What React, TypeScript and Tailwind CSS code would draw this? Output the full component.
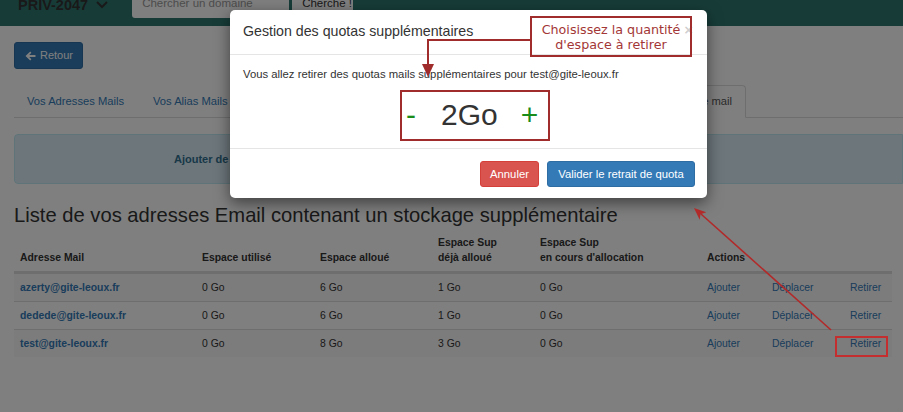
import React from "react";

const rows = [
  { email: "azerty@gite-leoux.fr", used: "0 Go", alloc: "6 Go", sup: "1 Go", pending: "0 Go" },
  { email: "dedede@gite-leoux.fr", used: "0 Go", alloc: "6 Go", sup: "1 Go", pending: "0 Go" },
  { email: "test@gite-leoux.fr", used: "0 Go", alloc: "8 Go", sup: "3 Go", pending: "0 Go" },
];

export default function App() {
  return (
    <div className="relative w-[903px] h-[412px] overflow-hidden bg-white font-['Liberation_Sans',Arial,sans-serif] text-[#333]">
      {/* Top navbar */}
      <div className="h-[26px] bg-[#2e7870] flex items-start overflow-hidden">
        <div className="ml-[18px] mt-[-3px] flex items-start">
          <span className="text-[14.5px] font-bold leading-[16px] text-[#333]">PRIV-2047</span>
          <svg className="ml-[8px] mt-[4px]" width="12" height="8" viewBox="0 0 12 8">
            <polyline points="1,1 6,6 11,1" fill="none" stroke="#333" strokeWidth="2" />
          </svg>
        </div>
        <div className="ml-[24px] mt-[-10px] h-[28px] w-[157px] bg-white rounded-[3px] flex items-center pl-[10px] text-[11.5px] text-[#999]">
          Chercher un domaine
        </div>
        <div className="ml-[3px] mt-[-10px] h-[28px] w-[61px] bg-white rounded-r-[3px] flex items-center pl-[10px] text-[11.5px] text-[#333]">
          Cherche !
        </div>
      </div>

      {/* Main content */}
      <div className="pl-[14px] pr-[11px]">
        <div className="mt-[16px] h-[27px] w-[69px] bg-[#337ab7] border border-[#2e6da4] rounded-[3px] flex items-center pl-[10px] gap-[4px] text-white text-[11px]">
          <svg width="11" height="10" viewBox="0 0 11 10">
            <path d="M0.5 5 L5.2 0.6 L6.4 1.8 L4.2 4 L10.5 4 L10.5 6 L4.2 6 L6.4 8.2 L5.2 9.4 Z" fill="white" />
          </svg>
          <span>Retour</span>
        </div>

        <div className="mt-[16px] h-[33px] -mr-[11px] flex border-b border-[#ddd] text-[11.2px]">
          <div className="w-[126px] pl-[13px] flex items-center text-[#337ab7] whitespace-nowrap">Vos Adresses Mails</div>
          <div className="w-[106px] pl-[13px] flex items-center text-[#337ab7] whitespace-nowrap">Vos Alias Mails</div>
          <div className="w-[162px] pl-[13px] flex items-center text-[#337ab7] whitespace-nowrap">Vos Listes de diffusion</div>
          <div className="w-[162px] pl-[13px] flex items-center text-[#337ab7] whitespace-nowrap">Vos Redirections</div>
          <div className="w-[176px] -mb-px bg-white border border-[#ddd] border-b-white rounded-t-[4px] flex items-center justify-end pr-[13px] text-[#555] whitespace-nowrap overflow-hidden">
            Stockage supplémentaire mail
          </div>
        </div>

        <div className="mt-[16px] h-[50px] -mr-[11px] bg-[#d9edf7] border border-[#bce8f1] rounded-l-[4px] flex items-center pl-[159px] text-[11px] font-bold text-[#31708f]">
          Ajouter de l'espace supplémentaire à une adresse mail
        </div>

        <h3 className="mt-[20px] text-[20.2px] leading-[22px] text-[#333]">
          Liste de vos adresses Email contenant un stockage supplémentaire
        </h3>

        <div className="mt-[9px] text-[10.4px]">
          <div className="grid grid-cols-[182px_118px_118px_102px_167px_65px_78px_1fr] items-end border-b-2 border-[#ddd] font-bold leading-[15px]">
            <div className="pl-[6px] pt-[1px] pb-[6px]">Adresse Mail</div>
            <div className="pl-[6px] pb-[6px]">Espace utilisé</div>
            <div className="pl-[6px] pb-[6px]">Espace alloué</div>
            <div className="pl-[6px] pb-[6px]">Espace Sup<br />déjà alloué</div>
            <div className="pl-[6px] pb-[6px]">Espace Sup<br />en cours d'allocation</div>
            <div className="pl-[6px] pb-[6px]">Actions</div>
            <div />
            <div />
          </div>
          {rows.map((r, i) => (
            <div
              key={r.email}
              className={`grid grid-cols-[182px_118px_118px_102px_167px_65px_78px_1fr] items-center h-[28px] border-t border-[#ddd] ${i % 2 === 0 ? "bg-[#f9f9f9]" : "bg-white"}`}
            >
              <div className="pl-[6px] font-bold text-[#337ab7]">{r.email}</div>
              <div className="pl-[6px]">{r.used}</div>
              <div className="pl-[6px]">{r.alloc}</div>
              <div className="pl-[6px]">{r.sup}</div>
              <div className="pl-[6px]">{r.pending}</div>
              <div className="pl-[6px] text-[#337ab7]">Ajouter</div>
              <div className="pl-[6px] text-[#337ab7]">Déplacer</div>
              <div className="pl-[6px] text-[#337ab7]">Retirer</div>
            </div>
          ))}
        </div>
      </div>

      {/* Backdrop */}
      <div className="absolute inset-0 bg-black/50" />

      {/* Modal */}
      <div className="absolute left-[230px] top-[10px] w-[477px] bg-white rounded-[5px] shadow-[0_5px_15px_rgba(0,0,0,0.5)]">
        <div className="h-[45px] border-b border-[#e5e5e5] flex items-center justify-between pl-[13px] pr-[14px]">
          <span className="text-[14.2px] text-[#333]">Gestion des quotas supplémentaires</span>
          <span className="text-[15px] font-bold text-black/20 -mt-[3px]">×</span>
        </div>
        <div className="pt-[11px] px-[13px] pb-[8px]">
          <div className="text-[11.3px] leading-[17px] text-[#333]">
            Vous allez retirer des quotas mails supplémentaires pour test@gite-leoux.fr
          </div>
          <div className="mt-[6px] ml-[157px] w-[150px] h-[51px] flex items-center leading-none text-[30px]">
            <span className="pl-[6px] text-[#1a8c1a]">-</span>
            <span className="ml-[25px] text-[#333]">2Go</span>
            <span className="ml-[23px] text-[#1a8c1a]">+</span>
          </div>
        </div>
        <div className="border-t border-[#e5e5e5] pt-[12px] pb-[11px] pr-[12px] flex justify-end gap-[8px] text-[11.3px] text-white">
          <div className="w-[59px] h-[26px] bg-[#d9534f] border border-[#d43f3a] rounded-[3px] flex items-center justify-center">
            Annuler
          </div>
          <div className="w-[148px] h-[26px] bg-[#337ab7] border border-[#2e6da4] rounded-[3px] flex items-center justify-center">
            Valider le retrait de quota
          </div>
        </div>
      </div>

      {/* Annotations */}
      <svg className="absolute inset-0 pointer-events-none" width="903" height="412" viewBox="0 0 903 412">
        <rect x="531" y="17" width="160" height="39" fill="none" stroke="#a02c2c" strokeWidth="2" />
        <polyline points="530,40 428,40 428,67" fill="none" stroke="#a02c2c" strokeWidth="2" />
        <polygon points="422,64 434,64 428,77" fill="#a02c2c" />
        <rect x="401" y="91" width="148" height="49" fill="none" stroke="#a02c2c" strokeWidth="2" />
        <rect x="836" y="337" width="51" height="19" fill="none" stroke="#c42e2e" strokeWidth="2" />
        <line x1="831" y1="330" x2="701" y2="214" stroke="#b22a2a" strokeWidth="1.6" />
        <polygon points="694,208 706.3,212.3 700.5,214.2 699.7,219.7" fill="#b22a2a" />
      </svg>
      <div className="absolute left-[531px] top-[17px] w-[160px] h-[39px] flex flex-col items-center justify-center font-['DejaVu_Sans',sans-serif] text-[12.7px] leading-[15px] text-[#a33636]">
        <span>Choisissez la quantité</span>
        <span>d'espace à retirer</span>
      </div>
    </div>
  );
}
